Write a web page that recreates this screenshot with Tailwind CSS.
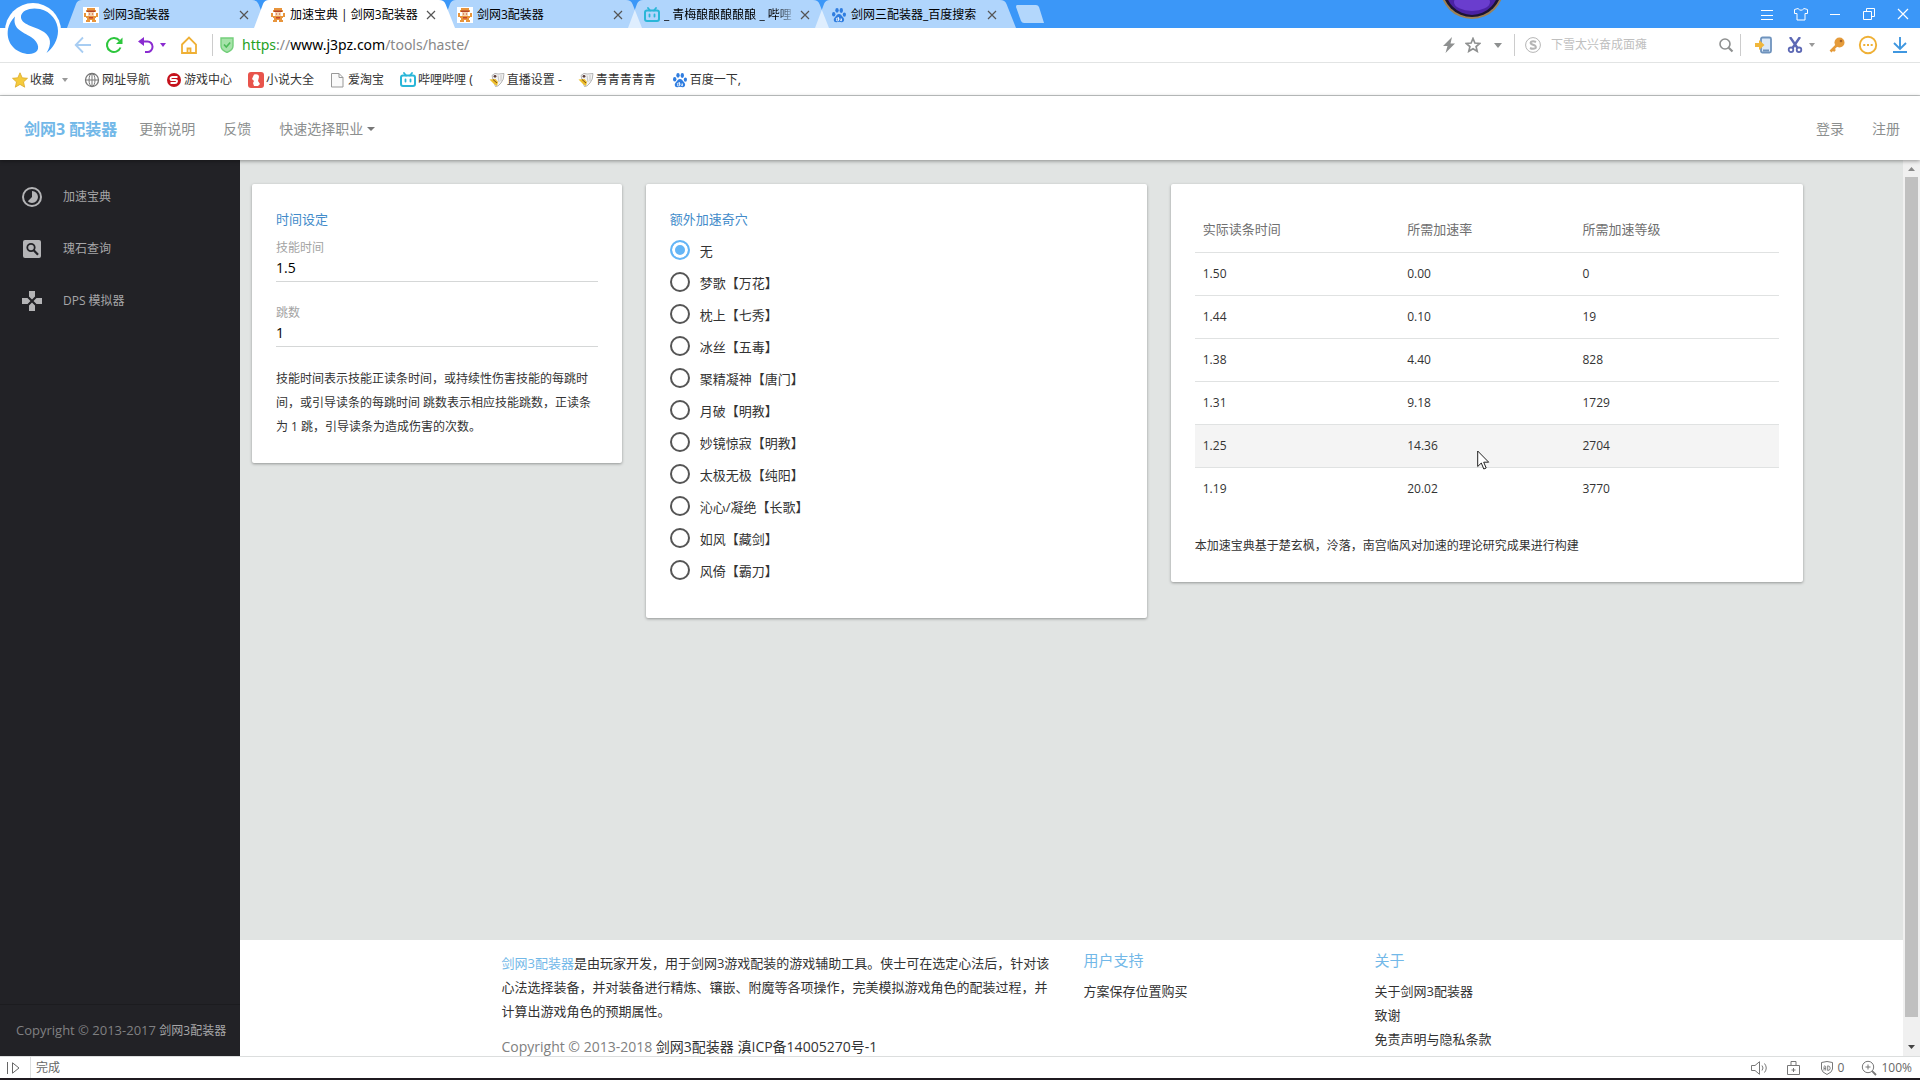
<!DOCTYPE html>
<html lang="zh-CN">
<head>
<meta charset="utf-8">
<title>加速宝典 | 剑网3配装器</title>
<script src="https://cdn.jsdelivr.net/npm/@tailwindcss/browser@4"></script>
</head>
<body class="relative flex h-screen flex-col overflow-hidden bg-white font-['Open_Sans','Noto_Sans_CJK_SC',sans-serif] text-xs text-[#333]">

<svg class="hidden" aria-hidden="true">
  <symbol id="tab" viewBox="0 0 201 28"><path d="M0 28 9 4Q10.500 0 15 0H185Q190 0 191.500 4L201 28Z"/></symbol>
  <symbol id="x" viewBox="0 0 10 10"><path d="M1 1 9 9M9 1 1 9" stroke="#555" stroke-width="1.200" fill="none"/></symbol>
  <symbol id="girl" viewBox="0 0 16 16"><path fill="#fff" d="M0 0h16v16H0z"/><path fill="#e8953c" d="M4 1h8v2h1v2H3V3h1zM1 6h2v4H1zM13 6h2v4h-2zM3 9h10v2H3zM4 11h8v2H4zM3 13h4v2H3zM9 13h4v2H9z"/><path fill="#b5452a" d="M4 3.500h8v1.500H4z"/><path fill="#f6d3ae" d="M5 5h6v4H5z"/><path fill="#c8452c" d="M6 6.500h1v1H6zM9 6.500h1v1H9zM6 10h4v1.500H6z"/></symbol>
  <symbol id="bili" viewBox="0 0 16 16"><rect x="1" y="3.500" width="14" height="10.500" rx="2" fill="none" stroke="#29b6d8" stroke-width="2"/><path d="M4 1 6 3.500M12 1 10 3.500M5.500 7.500v2M10.500 7.500v2" stroke="#29b6d8" stroke-width="1.800" stroke-linecap="round"/></symbol>
  <symbol id="paw" viewBox="0 0 16 16"><g fill="#2f7de0"><ellipse cx="2.700" cy="7.300" rx="1.700" ry="2.200"/><ellipse cx="6" cy="3.300" rx="1.700" ry="2.400"/><ellipse cx="10.300" cy="3.500" rx="1.700" ry="2.400"/><ellipse cx="13.400" cy="7.600" rx="1.600" ry="2.200"/><path d="M8 7c2 0 2.500 1.800 4 3.200 1.800 1.600 1.500 4.800-1 5-1.200.100-2-.400-3-.400s-2 .500-3 .400c-2.500-.200-3-3.200-1-5C5.600 8.800 6 7 8 7z"/></g><path d="M5.500 12.500a1 1 0 1 0 1.800 0 1 1 0 1 0-1.800 0M7.400 10v3.500M9 11.500v1.500q0 .700 1.500.700v-2.200" stroke="#fff" stroke-width=".8" fill="none"/></symbol>
  <symbol id="bird" viewBox="0 0 16 16"><path d="M3 3.500Q6 0 9 2L15 1.500Q15 8 12 11 9 15 6.500 14.500L4 8Z" fill="#f2f2f2" stroke="#a5a5a5" stroke-width=".8"/><path d="M9 3.500 10 10M12 3v6" stroke="#bbb" stroke-width=".8" fill="none"/><circle cx="6" cy="4.300" r="1.400" fill="#5b3d3a"/><path d="M.5 7.500 6.500 7 9 10 8 14 5 12Z" fill="#eebf2b"/><path d="M4 7.500 8 11" stroke="#7a4b1a"/></symbol>
</svg>

<header class="relative flex-none">
  <div class="flex h-7 bg-[#3b97f8] pl-[67px] text-black">
    <nav class="flex flex-1" aria-label="标签页">
      <div class="relative flex w-[187px] items-center pt-0.5 pr-[5px] pl-4">
        <svg class="absolute top-0 left-0 h-7 w-[201px] fill-white/60"><use href="#tab"/></svg>
        <svg class="relative mr-1 size-4 flex-none"><use href="#girl"/></svg>
        <span class="relative flex-1 whitespace-nowrap">剑网3配装器</span>
        <button class="relative" aria-label="关闭"><svg class="size-2.5"><use href="#x"/></svg></button>
      </div>
      <div class="relative z-10 flex w-[187px] items-center pt-0.5 pr-[5px] pl-4">
        <svg class="absolute top-0 left-0 h-7 w-[201px] fill-white"><use href="#tab"/></svg>
        <svg class="relative mr-1 size-4 flex-none"><use href="#girl"/></svg>
        <span class="relative flex-1 whitespace-nowrap">加速宝典 | 剑网3配装器</span>
        <button class="relative" aria-label="关闭"><svg class="size-2.5"><use href="#x"/></svg></button>
      </div>
      <div class="relative flex w-[187px] items-center pt-0.5 pr-[5px] pl-4">
        <svg class="absolute top-0 left-0 h-7 w-[201px] fill-white/60"><use href="#tab"/></svg>
        <svg class="relative mr-1 size-4 flex-none"><use href="#girl"/></svg>
        <span class="relative flex-1 whitespace-nowrap">剑网3配装器</span>
        <button class="relative" aria-label="关闭"><svg class="size-2.5"><use href="#x"/></svg></button>
      </div>
      <div class="relative flex w-[187px] items-center pt-0.5 pr-[5px] pl-4">
        <svg class="absolute top-0 left-0 h-7 w-[201px] fill-white/60"><use href="#tab"/></svg>
        <svg class="relative mr-1 size-4 flex-none"><use href="#bili"/></svg>
        <span class="relative mr-1 min-w-0 flex-1 overflow-hidden whitespace-nowrap [mask-image:linear-gradient(to_right,black_85%,transparent)]">_ 青梅酿酿酿酿酿 _ 哔哩</span>
        <button class="relative" aria-label="关闭"><svg class="size-2.5"><use href="#x"/></svg></button>
      </div>
      <div class="relative flex w-[187px] items-center pt-0.5 pr-[5px] pl-4">
        <svg class="absolute top-0 left-0 h-7 w-[201px] fill-white/60"><use href="#tab"/></svg>
        <svg class="relative mr-1 size-4 flex-none"><use href="#paw"/></svg>
        <span class="relative flex-1 whitespace-nowrap">剑网三配装器_百度搜索</span>
        <button class="relative" aria-label="关闭"><svg class="size-2.5"><use href="#x"/></svg></button>
      </div>
      <button class="ml-3.5 self-center" aria-label="新标签页"><svg class="h-[18px] w-7" viewBox="0 0 28 18"><path d="M1 0H20Q22 0 23 2L28 18H8Q6 18 5 16L0 2Q0 0 1 0Z" fill="#b3d7fc"/></svg></button>
    </nav>
    <div class="flex items-center">
      <button class="grid w-[34px] place-items-center" aria-label="菜单"><svg class="size-4" viewBox="0 0 16 16" fill="none" stroke="#fff"><path d="M2 4.500h12M2 9.500h12M2 13.500h12"/></svg></button>
      <button class="grid w-[34px] place-items-center" aria-label="皮肤"><svg class="size-4" viewBox="0 0 16 16" fill="none" stroke="#fff"><path d="M5 2.500 1.500 3.500v4h2.500v6.500h8V7.500h2.500v-4L11 2.500Q8 6 5 2.500Z"/></svg></button>
      <button class="grid w-[34px] place-items-center" aria-label="最小化"><svg class="size-3" viewBox="0 0 12 12" stroke="#fff"><path d="M1 6.500h10"/></svg></button>
      <button class="grid w-[34px] place-items-center" aria-label="还原"><svg class="size-3" viewBox="0 0 12 12" fill="none" stroke="#fff"><path d="M.5 3.500h8v8h-8zM3.500 3V.500h8v8H9"/></svg></button>
      <button class="grid w-[34px] place-items-center" aria-label="关闭窗口"><svg class="size-3" viewBox="0 0 12 12" fill="none" stroke="#fff" stroke-width="1.200"><path d="M1 1 11 11M11 1 1 11"/></svg></button>
    </div>
  </div>

  <div class="flex h-[35px] items-center border-b border-[#e2e4e4] pr-3 pl-[74px]">
    <button aria-label="后退"><svg class="h-[18px] w-[18px]" viewBox="0 0 18 18" fill="none" stroke="#a8cdf2" stroke-width="1.800"><path d="M17 9H2M9 1.500 1.700 9 9 16.500"/></svg></button>
    <button class="ml-[13px]" aria-label="刷新"><svg class="h-[18px] w-[18px]" viewBox="0 0 18 18"><path d="M15.500 11.500A7 7 0 1 1 14.500 4.700" fill="none" stroke="#2cc63c" stroke-width="2"/><path d="M17.500 1.500v6.500H11Z" fill="#2cc63c"/></svg></button>
    <button class="ml-[15px]" aria-label="撤销"><svg class="h-[18px] w-4" viewBox="0 0 16 18"><path d="M3 5.500h6.500a5 5.200 0 0 1 0 10.500H7" fill="none" stroke="#8a2bd0" stroke-width="2"/><path d="M0 5.500 6 1v9Z" fill="#8a2bd0"/></svg></button>
    <svg class="ml-1.5 h-1 w-1.5" viewBox="0 0 6 4"><path d="M0 0h6L3 4z" fill="#8a2bd0"/></svg>
    <button class="ml-3.5" aria-label="主页"><svg class="h-[18px] w-[18px]" viewBox="0 0 18 18" fill="none" stroke="#efb035" stroke-width="1.800"><path d="M2 8.500 9 1.500 16 8.500V17H2Z"/><path d="M7.500 17v-4.500h3V17"/></svg></button>
    <span class="ml-3.5 h-[22px] w-px bg-[#ccc]"></span>
    <svg class="ml-1.5 h-4 w-4" viewBox="0 0 16 16"><path d="M2 1h12v8q0 4-6 6.500Q2 13 2 9Z" fill="#a6e3a9" stroke="#74cf7b" stroke-width="1.400"/><path d="M5 7.500 7.300 10 11.200 5.500" fill="none" stroke="#4dbb58" stroke-width="1.600"/></svg>
    <span class="ml-[7px] flex-1 font-['Noto_Sans'] text-sm text-[#888]"><span class="text-[#24a124]">https</span>://<span class="text-black">www.j3pz.com</span>/tools/haste/</span>
    <button aria-label="加速"><svg class="h-4 w-3.5" viewBox="0 0 14 16"><path d="M10 0 1 9h4.500L3.500 16 13 6.500H8.500Z" fill="#8e9090"/></svg></button>
    <button class="ml-[9px]" aria-label="收藏"><svg class="size-4" viewBox="0 0 16 16"><path d="M8 1.500 9.900 6l4.800.400-3.600 3.200 1.100 4.700L8 11.800l-4.200 2.500 1.100-4.700L1.300 6.400 6.100 6Z" fill="none" stroke="#8e9090" stroke-width="1.700"/></svg></button>
    <svg class="ml-[13px] h-[5px] w-2" viewBox="0 0 8 5"><path d="M0 0h8L4 5z" fill="#8e9090"/></svg>
    <span class="ml-3 h-[22px] w-px bg-[#ccc]"></span>
    <svg class="ml-2.5 size-4" viewBox="0 0 16 16" fill="none" stroke="#b5b5b5"><circle cx="8" cy="8" r="7.400"/><path d="M11 5Q8 3.500 6 4.800 4.500 6.500 8 7.700 12 9 10.500 11.200 8 12.500 5 11" stroke-width="2"/></svg>
    <input class="ml-2.5 w-[167px] bg-transparent placeholder:text-[#bfbfbf] focus:outline-none" placeholder="下雪太兴奋成面瘫" aria-label="搜索">
    <button aria-label="搜索"><svg class="size-4" viewBox="0 0 16 16" fill="none" stroke="#8e9090"><circle cx="7" cy="7" r="5" stroke-width="1.600"/><path d="M10.700 10.700 14.500 14.500" stroke-width="2.200"/></svg></button>
    <span class="ml-1.5 h-[22px] w-px bg-[#ccc]"></span>
    <button class="ml-3.5" aria-label="发送到手机"><svg class="h-[18px] w-[17px]" viewBox="0 0 17 18"><rect x="6" y="1.500" width="10" height="15" rx="1.500" fill="#dbe9f8" stroke="#6f93bd" stroke-width="1.800"/><path d="M8 14.500h6" stroke="#6f93bd" stroke-width="2"/><path d="M0 7h4V4L9.500 9 4 14v-3H0Z" fill="#f0b73c"/></svg></button>
    <button class="ml-[15px]" aria-label="截图"><svg class="size-4" viewBox="0 0 16 16" fill="none" stroke="#5c68b4" stroke-width="1.800"><path d="M3 0 10.500 11M13 0 5.500 11" stroke-width="2.400"/><circle cx="4" cy="12.800" r="2.300"/><circle cx="12" cy="12.800" r="2.300"/></svg></button>
    <svg class="ml-1.5 h-1 w-1.5" viewBox="0 0 6 4"><path d="M0 0h6L3 4z" fill="#999"/></svg>
    <button class="ml-3.5" aria-label="密码"><svg class="size-4" viewBox="0 0 16 16"><path d="M8 8 1.500 14.500M4 12l2 2" stroke="#e59b3a" stroke-width="2.600"/><circle cx="10.500" cy="5.500" r="5" fill="#e59b3a"/><circle cx="12" cy="4" r="1.300" fill="#a0602a"/></svg></button>
    <button class="ml-[13px]" aria-label="更多"><svg class="size-5" viewBox="0 0 20 20"><circle cx="10" cy="10" r="8.200" fill="none" stroke="#efb035" stroke-width="1.900"/><path d="M5.300 9h2v2h-2zM9 9h2v2H9zM12.700 9h2v2h-2z" fill="#efb035"/></svg></button>
    <button class="ml-3.5" aria-label="下载"><svg class="size-4" viewBox="0 0 16 16" fill="none" stroke="#3f97e0" stroke-width="1.900"><path d="M8 0v11.500M2 6l6 6 6-6M1 15h14"/></svg></button>
  </div>

  <nav class="flex h-[33px] items-center gap-4 border-b border-[#c6c9c9] pt-px pl-3 font-['Noto_Sans','Noto_Sans_CJK_SC',sans-serif] whitespace-nowrap" aria-label="收藏栏">
    <a href="#" class="flex items-center gap-0.5"><svg class="size-4" viewBox="0 0 16 16"><path d="M8 .8 10.200 5.800l5.300.500-4 3.600 1.200 5.300L8 12.400l-4.700 2.800 1.200-5.300L.5 6.300l5.300-.5Z" fill="#f5cb3c" stroke="#dba92c" stroke-width=".8"/></svg>收藏<svg class="ml-1.5 h-1 w-1.5" viewBox="0 0 6 4"><path d="M0 0h6L3 4z" fill="#999"/></svg></a>
    <a href="#" class="flex items-center gap-0.5"><svg class="size-4" viewBox="0 0 16 16" fill="none" stroke="#777"><circle cx="8" cy="8" r="6.500" stroke-width="1.300"/><ellipse cx="8" cy="8" rx="3" ry="6.500"/><path d="M1.500 8h13M8 1.500v13"/></svg>网址导航</a>
    <a href="#" class="flex items-center gap-0.5"><svg class="size-4" viewBox="0 0 16 16"><circle cx="8" cy="8" r="7" fill="#c5121c"/><path d="M11.500 5H6.500Q4.500 5 4.500 6.700T6.500 8h3q1.800 0 1.500 1.500T9 11H4.500" fill="none" stroke="#fff" stroke-width="1.800"/></svg>游戏中心</a>
    <a href="#" class="flex items-center gap-0.5"><svg class="size-4" viewBox="0 0 16 16"><rect width="16" height="16" rx="3" fill="#e8544c"/><path d="M6 2.500q5-1 5 2.500l-1 4 2 3-2 2H6l-1-3 1-2-2-2Z" fill="#fff"/></svg>小说大全</a>
    <a href="#" class="flex items-center gap-0.5"><svg class="size-4" viewBox="0 0 16 16" fill="#fafafa" stroke="#999"><path d="M1.500 1.500h7.500l4 4v9.500H1.500zM9 1.500v4h4"/></svg>爱淘宝</a>
    <a href="#" class="flex items-center gap-0.5"><svg class="size-4"><use href="#bili"/></svg>哔哩哔哩 (</a>
    <a href="#" class="flex items-center gap-0.5"><svg class="size-4"><use href="#bird"/></svg>直播设置 -</a>
    <a href="#" class="flex items-center gap-0.5"><svg class="size-4"><use href="#bird"/></svg>青青青青青</a>
    <a href="#" class="flex items-center gap-0.5"><svg class="size-4"><use href="#paw"/></svg>百度一下,</a>
  </nav>

  <svg class="absolute top-0 left-0 h-[60px] w-16" viewBox="0 0 64 60">
    <circle cx="33" cy="31" r="28" fill="#fff"/>
    <path d="M21 16C22 10 31 7 40 9 51 11.500 58 21 58 31 58 40 53 48 46.500 53 52 44 51 37 44 32 35 26 20 25 21 16Z" fill="#3b97f8"/>
    <path d="M15 16.500C12 29 23 32 31 37 40 43 40 51 34 53 31 54.300 28 54.300 25 53.500 13 51 6 41 8 29 9 24 11.500 20 15 16.500Z" fill="#3b97f8"/>
  </svg>
  <svg class="absolute top-0 right-[415px] h-5 w-[66px]" viewBox="0 0 66 20">
    <circle cx="33" cy="-13" r="32" fill="#9c8156"/><circle cx="33" cy="-13" r="30" fill="#1c1430"/><ellipse cx="33" cy="-13" rx="27" ry="28" fill="#4a22a4"/><ellipse cx="33" cy="2" rx="18" ry="9" fill="#6a3dce"/>
  </svg>
</header>

<nav class="relative z-10 flex h-16 flex-none items-center bg-white pt-0.5 pr-5 pl-6 text-sm text-[#8c8f8f] shadow-[0_1px_4px_rgba(0,0,0,0.4)]" aria-label="主导航">
  <a href="#" class="text-base font-bold text-[#72b8e8]">剑网3 配装器</a>
  <a href="#" class="ml-[22px]">更新说明</a>
  <a href="#" class="ml-7">反馈</a>
  <button class="ml-7 flex items-center gap-1">快速选择职业<svg class="h-1 w-2" viewBox="0 0 8 4"><path d="M0 0h8L4 4z" fill="#777"/></svg></button>
  <a href="#" class="ml-auto">登录</a>
  <a href="#" class="ml-7">注册</a>
</nav>

<div class="flex min-h-0 flex-1">
  <aside class="flex w-60 flex-none flex-col bg-[#222226] pt-[11px] text-[#a6a6a8]">
    <a href="#" class="flex h-[52px] items-center gap-[19px] pl-5"><svg class="size-6" viewBox="0 0 24 24" fill="#b4b4b6"><path d="M16.240 7.760A5.970 5.970 0 0 0 12 6v6l-4.240 4.240a6 6 0 0 0 8.480 0 6 6 0 0 0 0-8.480zM12 2a10 10 0 1 0 0 20 10 10 0 0 0 0-20zm0 18a8 8 0 1 1 0-16 8 8 0 0 1 0 16z"/></svg>加速宝典</a>
    <a href="#" class="flex h-[52px] items-center gap-[19px] pl-5"><svg class="size-6" viewBox="0 0 24 24" fill="#b4b4b6"><path d="M5 3h14a2 2 0 0 1 2 2v14a2 2 0 0 1-2 2H5a2 2 0 0 1-2-2V5a2 2 0 0 1 2-2z"/><g fill="none" stroke="#222226"><circle cx="11" cy="10.500" r="3.700" stroke-width="1.800"/><path d="M13.500 13 18 17.700" stroke-width="2.200"/></g></svg>瑰石查询</a>
    <a href="#" class="flex h-[52px] items-center gap-[19px] pl-5"><svg class="size-6" viewBox="0 0 24 24" fill="#b4b4b6"><path d="M15 7.500V2H9v5.500l3 3 3-3zM7.500 9H2v6h5.500l3-3-3-3zM9 16.500V22h6v-5.500l-3-3-3 3zM16.500 9l-3 3 3 3H22V9h-5.500z"/></svg>DPS 模拟器</a>
    <p class="mt-auto border-t border-[#1c1c1f] px-4 py-[17px] text-[13px] whitespace-nowrap text-[#808082]">Copyright © 2013-2017 <a href="#" class="text-xs text-[#a6a6a8]">剑网3配装器</a></p>
  </aside>

  <div class="flex min-w-0 flex-1 flex-col overflow-hidden bg-[#e1e4e3]">
    <main class="grid w-full max-w-[1575px] flex-1 grid-cols-12 items-start pt-6">
      <section class="col-span-3 mx-3 rounded-xs bg-white px-6 pt-[23px] pb-6 shadow-[0_1px_3px_rgba(0,0,0,0.35)]">
        <h2 class="text-[13px] leading-6 text-[#428bca]">时间设定</h2>
        <label for="skill" class="mt-[5px] block leading-6 text-[#a3a3a3]">技能时间</label>
        <input id="skill" value="1.5" class="block h-[22px] w-full border-b border-[#d5d7d7] pb-1.5 text-sm leading-4 text-black focus:outline-none">
        <label for="jumps" class="mt-[19px] block leading-6 text-[#a3a3a3]">跳数</label>
        <input id="jumps" value="1" class="block h-[22px] w-full border-b border-[#d5d7d7] pb-1.5 text-sm leading-4 text-black focus:outline-none">
        <p class="mt-5 leading-6">技能时间表示技能正读条时间，或持续性伤害技能的每跳时间，或引导读条的每跳时间 跳数表示相应技能跳数，正读条为 1 跳，引导读条为造成伤害的次数。</p>
      </section>

      <section class="col-span-4 mx-3 rounded-xs bg-white px-6 pt-[23px] pb-8 text-[13px] shadow-[0_1px_3px_rgba(0,0,0,0.35)]">
        <h2 class="mb-[3px] leading-6 text-[#428bca]">额外加速奇穴</h2>
        <label class="flex h-8 items-center gap-2.5"><input type="radio" name="talent" checked class="size-5 appearance-none rounded-full border-2 border-[#555] checked:border-[#64b5f6] checked:bg-[#64b5f6] checked:shadow-[inset_0_0_0_3px_white]"><span class="pt-1">无</span></label>
        <label class="flex h-8 items-center gap-2.5"><input type="radio" name="talent" class="size-5 appearance-none rounded-full border-2 border-[#555]"><span class="pt-1">梦歌【万花】</span></label>
        <label class="flex h-8 items-center gap-2.5"><input type="radio" name="talent" class="size-5 appearance-none rounded-full border-2 border-[#555]"><span class="pt-1">枕上【七秀】</span></label>
        <label class="flex h-8 items-center gap-2.5"><input type="radio" name="talent" class="size-5 appearance-none rounded-full border-2 border-[#555]"><span class="pt-1">冰丝【五毒】</span></label>
        <label class="flex h-8 items-center gap-2.5"><input type="radio" name="talent" class="size-5 appearance-none rounded-full border-2 border-[#555]"><span class="pt-1">聚精凝神【唐门】</span></label>
        <label class="flex h-8 items-center gap-2.5"><input type="radio" name="talent" class="size-5 appearance-none rounded-full border-2 border-[#555]"><span class="pt-1">月破【明教】</span></label>
        <label class="flex h-8 items-center gap-2.5"><input type="radio" name="talent" class="size-5 appearance-none rounded-full border-2 border-[#555]"><span class="pt-1">妙镜惊寂【明教】</span></label>
        <label class="flex h-8 items-center gap-2.5"><input type="radio" name="talent" class="size-5 appearance-none rounded-full border-2 border-[#555]"><span class="pt-1">太极无极【纯阳】</span></label>
        <label class="flex h-8 items-center gap-2.5"><input type="radio" name="talent" class="size-5 appearance-none rounded-full border-2 border-[#555]"><span class="pt-1">沁心/凝绝【长歌】</span></label>
        <label class="flex h-8 items-center gap-2.5"><input type="radio" name="talent" class="size-5 appearance-none rounded-full border-2 border-[#555]"><span class="pt-1">如风【藏剑】</span></label>
        <label class="flex h-8 items-center gap-2.5"><input type="radio" name="talent" class="size-5 appearance-none rounded-full border-2 border-[#555]"><span class="pt-1">风倚【霸刀】</span></label>
      </section>

      <section class="col-span-5 mx-3 rounded-xs bg-white p-6 shadow-[0_1px_3px_rgba(0,0,0,0.35)]">
        <table class="w-full table-fixed text-left">
          <thead>
            <tr class="h-11 border-b border-[#e0e2e2] text-[13px] text-[#707070]">
              <th class="w-[35%] px-2 font-normal">实际读条时间</th><th class="w-[30%] px-2 font-normal">所需加速率</th><th class="w-[35%] px-2 font-normal">所需加速等级</th>
            </tr>
          </thead>
          <tbody>
            <tr class="h-[43px] border-b border-[#e0e2e2]"><td class="px-2">1.50</td><td class="px-2">0.00</td><td class="px-2">0</td></tr>
            <tr class="h-[43px] border-b border-[#e0e2e2]"><td class="px-2">1.44</td><td class="px-2">0.10</td><td class="px-2">19</td></tr>
            <tr class="h-[43px] border-b border-[#e0e2e2]"><td class="px-2">1.38</td><td class="px-2">4.40</td><td class="px-2">828</td></tr>
            <tr class="h-[43px] border-b border-[#e0e2e2]"><td class="px-2">1.31</td><td class="px-2">9.18</td><td class="px-2">1729</td></tr>
            <tr class="h-[43px] border-b border-[#e0e2e2] bg-[#f4f4f4]"><td class="px-2">1.25</td><td class="px-2">14.36</td><td class="px-2">2704</td></tr>
            <tr class="h-[43px]"><td class="px-2">1.19</td><td class="px-2">20.02</td><td class="px-2">3770</td></tr>
          </tbody>
        </table>
        <p class="mt-6 leading-6">本加速宝典基于楚玄枫，泠落，南宫临风对加速的理论研究成果进行构建</p>
      </section>
    </main>

    <footer class="h-[116px] flex-none overflow-hidden bg-white text-[13px] leading-6">
      <div class="mx-auto grid w-[70%] grid-cols-4">
        <div class="col-span-2 px-3 pt-[11px]">
          <p><a href="#" class="text-[#72b8e8]">剑网3配装器</a>是由玩家开发，用于剑网3游戏配装的游戏辅助工具。侠士可在选定心法后，针对该心法选择装备，并对装备进行精炼、镶嵌、附魔等各项操作，完美模拟游戏角色的配装过程，并计算出游戏角色的预期属性。</p>
          <p class="mt-3 text-sm leading-6 text-[#808080]">Copyright © 2013-2018 <a href="#" class="text-[#333]">剑网3配装器</a> <a href="#" class="text-[#333]">滇ICP备14005270号-1</a></p>
        </div>
        <div class="px-3 pt-2">
          <h3 class="mb-[7px] text-[15px] text-[#72b8e8]">用户支持</h3>
          <a href="#" class="block">方案保存位置购买</a>
        </div>
        <div class="px-3 pt-2">
          <h3 class="mb-[7px] text-[15px] text-[#72b8e8]">关于</h3>
          <a href="#" class="block">关于剑网3配装器</a>
          <a href="#" class="block">致谢</a>
          <a href="#" class="block">免责声明与隐私条款</a>
        </div>
      </div>
    </footer>
  </div>

  <div class="flex w-[17px] flex-none flex-col items-center bg-[#f0f0f0]">
    <span class="grid h-[17px] place-items-center"><svg class="h-1 w-[7px]" viewBox="0 0 7 4"><path d="M0 4h7L3.500 0z" fill="#888"/></svg></span>
    <span class="w-[13px] flex-1 bg-[#c0c0c0]"></span>
    <span class="flex h-[39px] items-end pb-[7px]"><svg class="h-1 w-[7px]" viewBox="0 0 7 4"><path d="M0 0h7L3.500 4z" fill="#444"/></svg></span>
  </div>
</div>

<footer class="flex h-6 flex-none items-center border-t border-b-2 border-t-[#dcdede] border-b-[#1f1a20] bg-white pr-2 text-[#666]">
  <button class="flex h-full w-[31px] items-center border-r border-[#dcdede] pl-[7px]" aria-label="侧栏"><svg class="h-3 w-4" viewBox="0 0 16 12" fill="none" stroke="#666"><path d="M.5 0v12M5.500.800v10.400L12 6Z"/></svg></button>
  <span class="ml-[5px] flex-1">完成</span>
  <button aria-label="声音"><svg class="h-3.5 w-4" viewBox="0 0 16 14" fill="none" stroke="#777"><path d="M.5 4.500H4L8.500.700v12.600L4 9.500H.500zM11 4.500q2 2.500 0 5M13.500 2.500q3.500 4.500 0 9"/></svg></button>
  <button class="ml-5" aria-label="安全"><svg class="h-3.5 w-3.5" viewBox="0 0 14 14" fill="none" stroke="#777"><path d="M.5 4.500h12v9H.500zM4 4.500v-4h5v4M6.500 7v4M4.500 9h4"/></svg></button>
  <button class="ml-[19px] flex items-center gap-1"><svg class="h-3.5 w-3.5" viewBox="0 0 14 14" fill="none" stroke="#777"><path d="M1.500 1.500Q7-.5 12.500 1.500V8q0 3-5.500 5.500Q1.500 11 1.500 8Z"/><path d="M4 9.500V5.500q.8-1.500 1.700 0V9.500M4 7.500h1.700M7.700 4.800v4.700q2.500 0 2.500-2.300T7.700 4.800Z" stroke-width=".9"/></svg>0</button>
  <button class="ml-[17px] flex items-center gap-1"><svg class="size-4" viewBox="0 0 16 16" fill="none" stroke="#777"><circle cx="7" cy="7" r="5.700"/><path d="M11.200 11.200 15 15" stroke-width="1.800"/><path d="M4.500 7h5M7 4.500v5"/></svg>100%</button>
</footer>

<svg class="absolute top-[450px] left-[1477px] z-20 h-5 w-3.5" viewBox="0 0 14 20"><path d="M.7 1v15.500L4.300 13l2.500 6 2.400-1-2.500-5.800h5Z" fill="#fff" stroke="#222"/></svg>
</body>
</html>
